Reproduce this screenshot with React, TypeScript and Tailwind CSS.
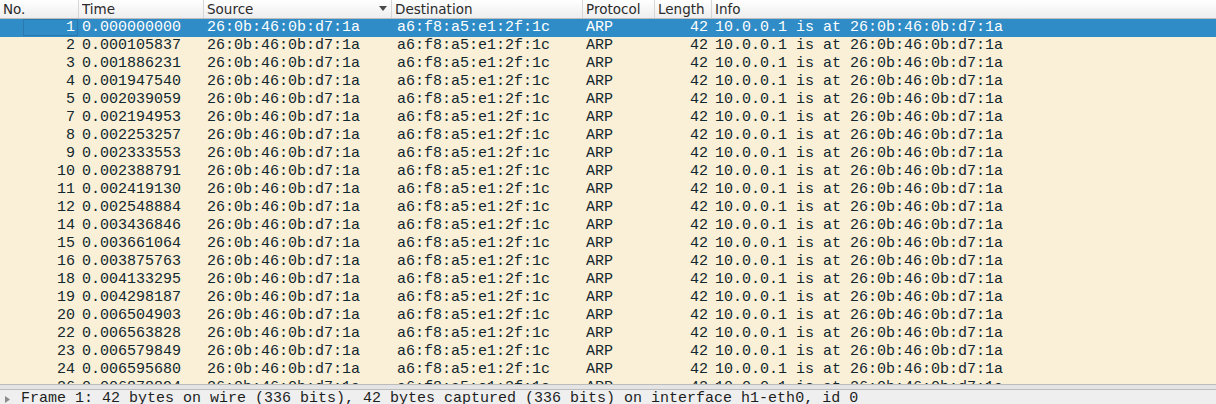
import React from "react";

const rows: [string, string][] = [
  ["1", "0.000000000"],
  ["2", "0.000105837"],
  ["3", "0.001886231"],
  ["4", "0.001947540"],
  ["5", "0.002039059"],
  ["7", "0.002194953"],
  ["8", "0.002253257"],
  ["9", "0.002333553"],
  ["10", "0.002388791"],
  ["11", "0.002419130"],
  ["12", "0.002548884"],
  ["14", "0.003436846"],
  ["15", "0.003661064"],
  ["16", "0.003875763"],
  ["18", "0.004133295"],
  ["19", "0.004298187"],
  ["20", "0.006504903"],
  ["22", "0.006563828"],
  ["23", "0.006579849"],
  ["24", "0.006595680"],
  ["26", "0.006878894"],
];

const mono = { fontFamily: '"Liberation Mono", "DejaVu Sans Mono", monospace' };

function HeaderCell({
  label,
  w,
  sort,
  last,
}: {
  label: string;
  w: string;
  sort?: boolean;
  last?: boolean;
}) {
  return (
    <div
      className={`${w} ${last ? "flex-1" : "shrink-0 border-r border-[#d6d6d6]"} h-full flex items-center pl-[3px] pr-[4px] relative`}
    >
      <span className="truncate">{label}</span>
      {sort && (
        <svg
          className="absolute right-[4px] top-[6px]"
          width="8"
          height="5"
          viewBox="0 0 8 5"
        >
          <path d="M0 0 L8 0 L4 5 Z" fill="#4a4a4a" />
        </svg>
      )}
    </div>
  );
}

export default function App() {
  return (
    <div className="w-[1216px] h-[404px] overflow-hidden flex flex-col bg-[#faf0d7]">
      {/* header */}
      <div
        className="h-[19px] shrink-0 flex border-b border-[#bdbdbd] bg-gradient-to-b from-[#ffffff] to-[#eeeeee] text-[13.5px] text-[#2b2b2b]"
        style={{ fontFamily: '"DejaVu Sans", "Noto Sans", sans-serif' }}
      >
        <HeaderCell label="No." w="w-[79px]" />
        <HeaderCell label="Time" w="w-[125px]" />
        <HeaderCell label="Source" w="w-[188px]" sort />
        <HeaderCell label="Destination" w="w-[191px]" />
        <HeaderCell label="Protocol" w="w-[72px]" />
        <HeaderCell label="Length" w="w-[57px]" />
        <HeaderCell label="Info" w="" last />
      </div>

      {/* packet list */}
      <div className="flex-1 min-h-0 overflow-hidden text-[15px] leading-[18px]" style={mono}>
        {rows.map(([no, time], i) => {
          const sel = i === 0;
          return (
            <div
              key={no}
              className={`h-[18px] flex whitespace-pre ${sel ? "bg-[#308cc6] text-white" : "bg-[#faf0d7] text-[#12272e]"}`}
            >
              <div className="w-[79px] shrink-0 flex justify-end pr-[4px] relative">
                {sel && (
                  <div className="absolute left-[23px] right-[1px] top-0 bottom-[1px] border border-[#2a79ae]" />
                )}
                <span className="relative">{no}</span>
              </div>
              <div className="w-[125px] shrink-0 pl-[3px]">{time}</div>
              <div className="w-[188px] shrink-0 pl-[3px]">26:0b:46:0b:d7:1a</div>
              <div className="w-[191px] shrink-0 pl-[5px]">a6:f8:a5:e1:2f:1c</div>
              <div className="w-[72px] shrink-0 pl-[3px]">ARP</div>
              <div className="w-[57px] shrink-0 flex justify-end pr-[4px]">42</div>
              <div className="flex-1 pl-[3px]">10.0.0.1 is at 26:0b:46:0b:d7:1a</div>
            </div>
          );
        })}
      </div>

      {/* splitter + details */}
      <div className="h-[20px] shrink-0 flex flex-col overflow-hidden">
        <div className="h-[1px] shrink-0 bg-[#bcbcbc]" />
        <div className="h-[4px] shrink-0 bg-[#e4e4e4]" />
        <div className="h-[1px] shrink-0 bg-[#bcbcbc]" />
        <div className="flex-1 bg-[#efefef] flex items-start">
          <div className="h-[18px] flex items-center whitespace-pre text-[15px] leading-[18px] text-[#1e1e1e]" style={mono}>
            <svg className="ml-[5px] mr-[11px] mt-[1px]" width="5" height="7" viewBox="0 0 5 7">
              <path d="M0 0 L5 3.5 L0 7 Z" fill="#8a8a8a" />
            </svg>
            <span>Frame 1: 42 bytes on wire (336 bits), 42 bytes captured (336 bits) on interface h1-eth0, id 0</span>
          </div>
        </div>
      </div>
    </div>
  );
}
